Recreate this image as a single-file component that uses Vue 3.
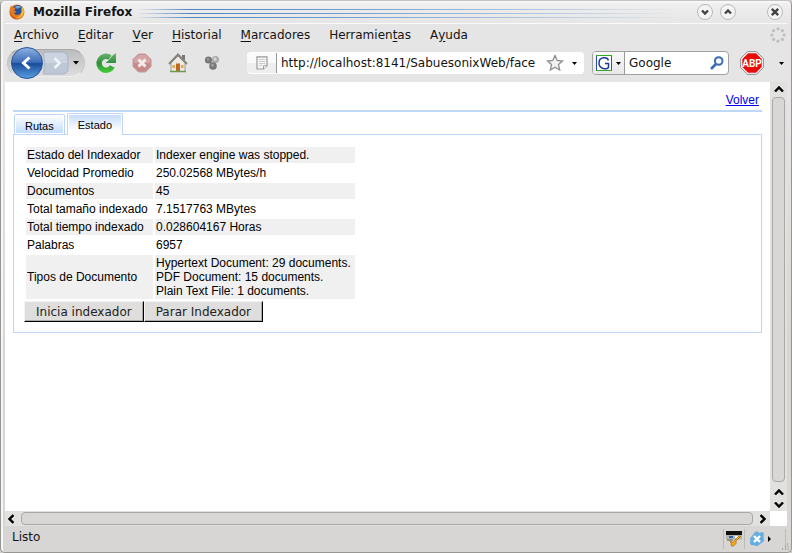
<script setup>
import { ref } from 'vue'

const menus = [
  ['', 'A', 'rchivo'],
  ['', 'E', 'ditar'],
  ['', 'V', 'er'],
  ['', 'H', 'istorial'],
  ['', 'M', 'arcadores'],
  ['Herramien', 't', 'as'],
  ['A', 'y', 'uda'],
]

const rows = [
  ['Estado del Indexador', ['Indexer engine was stopped.']],
  ['Velocidad Promedio', ['250.02568 MBytes/h']],
  ['Documentos', ['45']],
  ['Total tamaño indexado', ['7.1517763 MBytes']],
  ['Total tiempo indexado', ['0.028604167 Horas']],
  ['Palabras', ['6957']],
  ['Tipos de Documento', [
    'Hypertext Document: 29 documents.',
    'PDF Document: 15 documents.',
    'Plain Text File: 1 documents.',
  ]],
]

const spokes = [0, 45, 90, 135, 180, 225, 270, 315]
const address = ref('http://localhost:8141/SabuesonixWeb/face')
const query = ref('Google')
</script>

<template>
  <div class="window">
    <header class="titlebar">
      <svg class="logo" width="16" height="16" viewBox="0 0 16 16">
        <circle cx="8" cy="8" r="7.5" fill="#e2741b" />
        <circle cx="8.6" cy="6.6" r="5.6" fill="#24529c" />
        <path d="M6 2.5c2-1.5 5-1 6 1-1.500 0-2 1-3.500 1S6.500 4 6 2.500z" fill="#68a5dc" />
        <path d="M1 4l1-2.500L4 3.500c1.500-.3 2.500.5 2.500 1.200L5 6.500l2.500 1c-1 1.500-2 1-2.500 1.500 1 2.500 4.500 2.500 6.500.5 1.500-1.500 1.500-4 .5-6 3 2 3.500 6 1.500 9-3 4-9 3.500-11.500 0C.4 10.300.2 7 1 4z" fill="#e67a1e" />
        <path d="M12.500 3c3 2.500 2.800 6.500.5 9-2 2-4.500 2.300-6 1.800 4 0 6.800-3.800 5.500-10.800z" fill="#f8c83c" />
        <path d="M1.500 8c.5 3.500 3 6 6.500 6.500-3 1-7.500-2-6.500-6.500z" fill="#c43a18" />
      </svg>
      <h1>Mozilla Firefox</h1>
      <span class="stripes"><i></i><i></i><i></i></span>
      <button class="wm" aria-label="Minimizar"><svg width="18" height="18" viewBox="0 0 18 18"><circle cx="9" cy="9" r="7.500" /><path d="M6 7.500l3 3 3-3" /></svg></button>
      <button class="wm" aria-label="Maximizar"><svg width="18" height="18" viewBox="0 0 18 18"><circle cx="9" cy="9" r="7.500" /><path d="M6 10.500l3-3 3 3" /></svg></button>
      <button class="wm close" aria-label="Cerrar"><svg width="18" height="18" viewBox="0 0 18 18"><circle cx="9" cy="9" r="7.500" /><path d="M5.800 5.800l6.400 6.400M12.200 5.800l-6.400 6.400" /></svg></button>
    </header>

    <nav class="menubar">
      <button v-for="m in menus" :key="m[2]">{{ m[0] }}<u>{{ m[1] }}</u>{{ m[2] }}</button>
      <svg class="throbber" width="16" height="16" viewBox="0 0 16 16">
        <circle v-for="a in spokes" :key="a" cx="8" cy="1.800" r="1.600" :transform="`rotate(${a} 8 8)`" fill="#bfbfbf" />
      </svg>
    </nav>

    <div class="toolbar">
      <div class="history">
        <button class="back" aria-label="Atrás">
          <svg width="34" height="34" viewBox="0 0 34 34">
            <defs>
              <linearGradient id="ball" x1="0" y1="0" x2="0" y2="1">
                <stop offset="0" stop-color="#8fb2e2" /><stop offset=".48" stop-color="#3a6cb8" />
                <stop offset=".52" stop-color="#1b4c9a" /><stop offset="1" stop-color="#5aa0e0" />
              </linearGradient>
            </defs>
            <circle cx="17" cy="17" r="15.500" fill="url(#ball)" stroke="#2b569c" />
            <path d="M19.500 11.500L13.500 17l6 5.500" fill="none" stroke="#fff" stroke-width="3" />
          </svg>
        </button>
        <button class="forward" aria-label="Adelante">
          <svg width="26" height="24" viewBox="0 0 26 24">
            <path d="M0 1h21q4 1 4 5v12q0 4-4 5H0q4-11 0-22z" fill="#bdc8d7" stroke="#aab4c2" />
            <path d="M1 2h20q3 1 3 4v6H2.500z" fill="#cbd4e0" />
            <path d="M11.500 7l5 5-5 5" fill="none" stroke="#f0f3f7" stroke-width="2.600" />
          </svg>
        </button>
        <button class="drop" aria-label="Historial reciente"><svg width="6" height="4" viewBox="0 0 6 4"><path d="M0 0h6L3 3.500z" /></svg></button>
      </div>
      <button class="tool reload" aria-label="Recargar">
        <svg width="24" height="24" viewBox="0 0 24 24">
          <defs><linearGradient id="leaf" x1="0" y1="0" x2="0" y2="24" gradientUnits="userSpaceOnUse"><stop offset="0" stop-color="#78bd78" /><stop offset=".5" stop-color="#2f8f3a" /><stop offset="1" stop-color="#49df35" /></linearGradient></defs>
          <path d="M16 6.500A7 7 0 1 0 18.300 15.500" fill="none" stroke="url(#leaf)" stroke-width="5.400" />
          <path d="M22 2v10H11.500L15 9l3-4z" fill="url(#leaf)" />
        </svg>
      </button>
      <button class="tool" aria-label="Detener">
        <svg width="20" height="20" viewBox="0 0 20 20">
          <path d="M6.500 1h7L19 6.500v7L13.500 19h-7L1 13.500v-7z" fill="#c88989" stroke="#bf9c9c" />
          <path d="M6.500 2h7L18 6.500V10H2V6.500z" fill="#d5a5a5" />
          <path d="M6.500 6.500l7 7M13.500 6.500l-7 7" stroke="#f6eded" stroke-width="3" />
        </svg>
      </button>
      <button class="tool" aria-label="Inicio">
        <svg width="20" height="20" viewBox="0 0 20 20">
          <path d="M14 2h3v5h-3z" fill="#777" />
          <path d="M3 10l7-7 7 7v8.500H3z" fill="#eeeae2" stroke="#9b9b94" />
          <path d="M1 11l9-9.500L19 11" fill="none" stroke="#858580" stroke-width="2" />
          <path d="M8 10.500h4V18H8z" fill="#bf6a24" /><path d="M4.500 12h2.500v3H4.500zM13 12h2.500v3H13z" fill="#e9a54c" />
          <path d="M2 18.500h16" stroke="#6c9a4c" stroke-width="1.500" />
        </svg>
      </button>
      <button class="tool addons" aria-label="Complementos">
        <svg width="16" height="16" viewBox="0 0 16 16">
          <circle cx="4.500" cy="5" r="3.600" fill="#777" /><circle cx="11.500" cy="4.500" r="3.600" fill="#aaa" />
          <circle cx="9" cy="11" r="3.800" fill="#777" /><circle cx="11" cy="4" r="1.700" fill="#d4d4d4" />
          <circle cx="4" cy="4.500" r="1.300" fill="#999" /><circle cx="8.500" cy="10.300" r="1.400" fill="#a4a4a4" />
        </svg>
      </button>

      <div class="address">
        <span class="site">
          <svg width="12" height="14" viewBox="0 0 12 14"><path d="M1 .8h10v9L7.500 13H1z" fill="#f5f5f5" stroke="#999" stroke-width="1.200" /><path d="M3 3.500h6M3 5.500h6M3 7.500h6M3 9.500h3" stroke="#ccc" /><path d="M11 9.800H7.500V13" fill="#fff" stroke="#999" /></svg>
        </span>
        <input v-model="address" type="text" aria-label="Dirección">
        <button aria-label="Marcar página">
          <svg width="18" height="18" viewBox="0 0 18 18"><path d="M9 1.500l2.200 5 5.300.5-4 3.600 1.200 5.400L9 13.200 4.300 16l1.200-5.400-4-3.600 5.300-.5z" fill="#f1f1f1" stroke="#8d8d8d" stroke-width="1.300" /></svg>
        </button>
        <button class="open" aria-label="Mostrar direcciones"><svg width="5" height="3" viewBox="0 0 5 3"><path d="M0 0h5L2.500 3z" /></svg></button>
      </div>

      <div class="search">
        <button class="engine" aria-label="Motor de búsqueda">
          <svg width="16" height="16" viewBox="0 0 16 16">
            <path d="M.5.500h15v15H.5z" fill="#fff" /><path d="M0 .5h16" stroke="#38a528" /><path d="M15.500 1v14" stroke="#dd1c1c" /><path d="M0 15.500h16" stroke="#38a528" /><path d="M.5 1v14" stroke="#274eb4" />
            <path d="M12.500 5.500C11.500 1.500 3 1.500 3 8s8 6.500 9.500 4.500V8.500H9" fill="none" stroke="#1c3b9c" stroke-width="1.500" />
          </svg>
          <svg width="5" height="3" viewBox="0 0 5 3"><path d="M0 0h5L2.500 3z" /></svg>
        </button>
        <input v-model="query" type="text" aria-label="Buscar">
        <button aria-label="Buscar en Google">
          <svg width="14" height="14" viewBox="0 0 14 14"><circle cx="8.700" cy="5" r="3.800" fill="#f5f9ff" stroke="#3a6cb5" stroke-width="2" /><path d="M6 8l-5 5" stroke="#3a6cb5" stroke-width="2.600" /></svg>
        </button>
      </div>

      <button class="abp" aria-label="Adblock Plus">
        <svg width="24" height="24" viewBox="0 0 24 24">
          <path d="M7.500.700h9l6.800 6.800v9l-6.800 6.800h-9L.7 16.500v-9z" fill="#fff" stroke="#858585" />
          <path d="M8 2.300h8L21.700 8v8L16 21.700H8L2.300 16V8z" fill="#e80c0c" />
          <text x="12" y="16" text-anchor="middle">ABP</text>
        </svg>
      </button>
      <button class="more" aria-label="Opciones de Adblock"><svg width="5" height="3" viewBox="0 0 5 3"><path d="M0 0h5L2.500 3z" /></svg></button>
    </div>

    <div class="view">
      <main class="page">
        <div class="top"><a href="#volver">Volver</a></div>
        <div class="tabs" role="tablist">
          <button role="tab" aria-selected="false" class="tab">Rutas</button>
          <button role="tab" aria-selected="true" class="tab active">Estado</button>
        </div>
        <section class="panel">
          <table>
            <tbody>
              <tr v-for="r in rows" :key="r[0]">
                <th scope="row">{{ r[0] }}</th>
                <td><div v-for="line in r[1]" :key="line">{{ line }}</div></td>
              </tr>
            </tbody>
          </table>
          <div class="actions">
            <button>Inicia indexador</button><button>Parar Indexador</button>
          </div>
        </section>
      </main>
      <div class="vbar">
        <svg class="up" width="10" height="6" viewBox="0 0 10 6"><path d="M1 5.500l4-4 4 4" /></svg>
        <span class="thumb"></span>
        <svg width="10" height="6" viewBox="0 0 10 6"><path d="M1 5.500l4-4 4 4" /></svg>
        <svg width="10" height="6" viewBox="0 0 10 6"><path d="M1 .5l4 4 4-4" /></svg>
      </div>
      <div class="hbar">
        <svg width="6" height="10" viewBox="0 0 6 10"><path d="M5.500 1l-4 4 4 4" /></svg>
        <span class="thumb"></span>
        <svg width="6" height="10" viewBox="0 0 6 10"><path d="M.5 1l4 4-4 4" /></svg>
      </div>
    </div>

    <footer class="status">
      <span class="message">Listo</span>
      <span class="cell">
        <svg width="16" height="16" viewBox="0 0 16 16">
          <path d="M0 0h16v4H0z" fill="#111" /><path d="M0 4h16v4.500H0z" fill="#b5b5ad" /><path d="M3 5h4v2H3z" fill="#2465b0" /><path d="M9 5h3v2H9z" fill="#fff" /><path d="M1 9h6" stroke="#555" />
          <path d="M14.500 5.500L10 10v2.500c-1.500 1.500-2 3-4.500 2.500L5 12l-1-2 3 1.500L9 9l4-4z" fill="#f4ac16" stroke="#a96905" stroke-width=".7" />
        </svg>
      </span>
      <span class="cell last">
        <svg width="16" height="16" viewBox="0 0 16 16">
          <path d="M6 1q3-2 4 1l3-1q3 1 1.500 4L15 10q-2 2-4 3-2 3-5 1.500L2 14q-2-2-.5-4.500Q0 7 3 5z" fill="#68ade0" />
          <path d="M5 5l6 6M11 5l-6 6" stroke="#fff" stroke-width="2.400" />
        </svg>
        <svg width="3" height="6" viewBox="0 0 3 6"><path d="M0 0l3 3-3 3z" /></svg>
      </span>
      <svg class="grip" width="8" height="8" viewBox="0 0 8 8"><path d="M6 1h1M4 3.500h1M6.500 3.500h1M1 6h1M4 6h1M6.500 6h1" stroke="#999" stroke-width="1.300" /></svg>
    </footer>
  </div>
</template>

<style>
body {
  background: #cfcdca;
}
</style>

<style scoped>
* {
  box-sizing: border-box;
}
.window {
  display: flex;
  flex-direction: column;
  height: 100vh;
  padding: 0 4px;
  border: 1px solid #989693;
  border-top-color: #c4c4c4;
  border-radius: 5px;
  background: linear-gradient(#f0f0f0, #e5e5e5 24px, #e5e5e5 100px, #d7d6d4 340px);
  box-shadow: inset 1px 1px 0 1px #f6f6f6;
  color: #141414;
  font: 12px/16px "DejaVu Sans", sans-serif;
  overflow: hidden;
}
button {
  display: flex;
  align-items: center;
  justify-content: center;
  flex: none;
  margin: 0;
  padding: 0;
  border: 0;
  background: none;
  color: inherit;
  font: inherit;
}
svg {
  display: block;
  flex: none;
}
input {
  width: 0;
  min-width: 0;
  flex: 1;
  padding: 0;
  border: 0;
  outline: 0;
  background: transparent;
  color: inherit;
  font: inherit;
}
.titlebar {
  display: flex;
  align-items: center;
  flex: none;
  height: 23px;
  padding: 0 3px 0 4px;
  border-bottom: 1px solid #fafafa;
}
h1 {
  margin: 0 0 0 8px;
  font-size: 12px;
  line-height: 16px;
}
.stripes {
  display: flex;
  flex: 1;
  flex-direction: column;
  gap: 3px;
  margin: 3px 16px 0 4px;
}
.stripes i {
  height: 1px;
  background: linear-gradient(90deg, transparent, #4d85c4 10%, #6c9bd0 35%, #b4c8df 75%, transparent);
}
.wm {
  margin-right: 5px;
}
.wm.close {
  margin: 0 0 0 24px;
}
.wm circle {
  fill: #f4f4f4;
  stroke: #b9b9b9;
}
.wm path {
  fill: none;
  stroke: #444;
  stroke-width: 2.4;
}
.menubar {
  display: flex;
  align-items: center;
  flex: none;
  gap: 19px;
  height: 21px;
  padding: 0 1px 0 9px;
}
.menubar u {
  text-underline-offset: 2px;
}
.throbber {
  margin-left: auto;
}
.toolbar {
  display: flex;
  align-items: center;
  flex: none;
  height: 37px;
  padding: 0 3px 1px 2px;
}
.history {
  display: flex;
  align-items: center;
  height: 28px;
  margin-right: 9px;
  padding-right: 1px;
  border: 1px solid #a8a8a8;
  border-color: #a8a8a8 #c4c4c4 #eee;
  border-radius: 14px;
  background: linear-gradient(#bcbcbc, #dedede);
}
.back {
  margin: 0 -1px 0 2px;
}
.back svg {
  position: relative;
  z-index: 1;
}
.drop {
  width: 14px;
}
.tool {
  width: 20px;
  margin-right: 16px;
}
.tool.reload {
  width: 24px;
  margin-right: 14px;
}
.tool.addons {
  width: 16px;
}
.address {
  display: flex;
  align-items: center;
  flex: 337;
  min-width: 0;
  height: 22px;
  margin: 0 8px 0 11px;
  border-radius: 4px;
  background: #fff;
}
.site {
  display: flex;
  align-items: center;
  justify-content: center;
  width: 30px;
  height: 20px;
  margin-right: 4px;
  border-right: 1px solid #999;
  border-radius: 4px 0 0 4px;
  background: linear-gradient(#fafafa 50%, #eee 50%);
}
.address button {
  margin-left: 4px;
}
.address .open {
  width: 20px;
  margin-left: 0;
}
.search {
  display: flex;
  align-items: center;
  flex: 131;
  min-width: 0;
  height: 24px;
  padding-right: 4px;
  border: 1px solid #a1a1a1;
  border-radius: 4px;
  background: #fff;
}
.engine {
  gap: 4px;
  width: 32px;
  height: 22px;
  margin-right: 4px;
  border-right: 1px solid #999;
  border-radius: 3px 0 0 3px;
  background: linear-gradient(#f8f8f8, #e8e8e8);
}
.abp {
  margin: 0 15px 0 11px;
}
.abp text {
  fill: #fff;
  font: bold 10px Roboto, sans-serif;
}
.view {
  display: grid;
  flex: 1;
  min-height: 0;
  grid-template: minmax(0, 1fr) 15px / minmax(0, 1fr) 17px;
  background: #fff;
}
.page {
  padding: 10px 8px;
  color: #000;
  font: 12px/14px "Liberation Sans", Arial, sans-serif;
  overflow: hidden;
}
.top {
  padding: 1px 3px 3px;
  border-bottom: 2px solid #bfd8f5;
  text-align: right;
}
.top a {
  color: #00e;
}
.tabs {
  display: flex;
  align-items: flex-end;
  gap: 2px;
  height: 22px;
  padding: 1px 0 0 1px;
}
.tab {
  height: 20px;
  padding: 2px 10px 0;
  border: 1px solid #bfd5f5;
  border-bottom: 0;
  border-radius: 2px 2px 0 0;
  background: linear-gradient(#fff, #bfdbff);
  box-shadow: inset 0 0 0 1px #fff;
  font-size: 11px;
}
.tab.active {
  height: 22px;
  margin-bottom: -1px;
  padding-top: 0;
  background: linear-gradient(#c3dcff, #fff 80%);
  position: relative;
}
.panel {
  padding: 10px;
  border: 1px solid #bfd5f5;
}
table {
  border-spacing: 2px;
  border-collapse: separate;
}
th,
td {
  padding: 1px;
  font-weight: normal;
  text-align: left;
  white-space: nowrap;
}
th {
  min-width: 127px;
}
td {
  min-width: 200px;
}
tr:nth-child(odd) > * {
  background: #f0f0f0;
}
.actions {
  display: flex;
}
.actions button {
  height: 21px;
  padding: 0 11px;
  border: 1px solid #f4f4f4;
  border-right-color: #000;
  border-bottom-color: #000;
  background: #dfdedc;
  box-shadow: inset -1px -1px #aaa;
  color: #222;
  font: 12px/16px "DejaVu Sans", sans-serif;
}
.vbar,
.hbar {
  display: flex;
  align-items: center;
  background: #e1e1e0;
}
.vbar {
  flex-direction: column;
  gap: 7px;
  padding: 4px 0 3px;
}
.vbar .up {
  margin-bottom: -2px;
}
.hbar {
  gap: 7px;
  padding: 0 4px 0 3px;
}
.vbar path,
.hbar path {
  fill: none;
  stroke: #000;
  stroke-width: 2.4;
}
.thumb {
  flex: 1;
  border: 1px solid #aaa9a8;
  border-radius: 4px;
  background: #d8d7d5;
}
.vbar .thumb {
  width: 13px;
}
.hbar .thumb {
  height: 13px;
}
.status {
  display: flex;
  align-items: center;
  flex: none;
  height: 26px;
  padding-left: 7px;
}
.message {
  flex: 1;
  padding-bottom: 4px;
}
.cell {
  display: flex;
  align-items: center;
  gap: 3px;
  height: 20px;
  padding: 0 2px;
  border: solid #bcbbb9;
  border-width: 0 1px;
}
.cell.last {
  border-left: 0;
  padding: 0 14px 0 4px;
}
.grip {
  align-self: flex-end;
  margin: 0 -2px 1px -5px;
}
</style>
